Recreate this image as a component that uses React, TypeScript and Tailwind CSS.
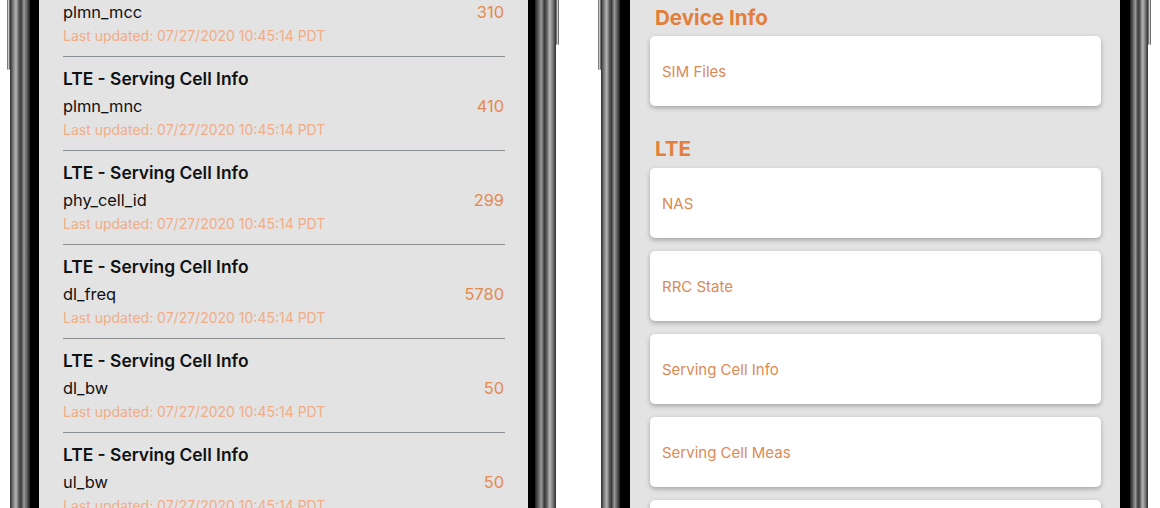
import React from "react";

const rows = [
  { field: "plmn_mcc", value: "310" },
  { field: "plmn_mnc", value: "410" },
  { field: "phy_cell_id", value: "299" },
  { field: "dl_freq", value: "5780" },
  { field: "dl_bw", value: "50" },
  { field: "ul_bw", value: "50" },
];

const bezelL =
  "bg-[linear-gradient(90deg,#2c2c2c_0%,#7a7a7a_15%,#b5b5b5_30%,#5a5a5a_45%,#3a3a3a_55%,#9a9a9a_70%,#5c5c5c_85%,#1e1e1e_100%)]";
const bezelR =
  "bg-[linear-gradient(90deg,#1e1e1e_0%,#5c5c5c_15%,#9a9a9a_30%,#3a3a3a_45%,#5a5a5a_55%,#b5b5b5_70%,#7a7a7a_85%,#2c2c2c_100%)]";

function Button({ h }: { h: string }) {
  return (
    <div
      className={`w-[3px] ${h} self-start rounded-b-[2px] bg-[linear-gradient(90deg,#555,#c8c8c8,#444)]`}
    />
  );
}

function Row({ field, value }: { field: string; value: string }) {
  return (
    <div className="border-t border-[#8a8f94] pt-[11px] pb-[10px]">
      <div className="text-[17.4px] leading-[22px] font-semibold text-[#111]">
        LTE - Serving Cell Info
      </div>
      <div className="mt-[5px] flex items-center justify-between text-[16.4px] leading-[22px]">
        <span className="text-[#111]">{field}</span>
        <span className="text-[#e58a4f] pr-[1px]">{value}</span>
      </div>
      <div className="mt-[3px] text-[14px] leading-[20px] text-[#f0ad88]">
        Last updated: 07/27/2020 10:45:14 PDT
      </div>
    </div>
  );
}

function Card({ label }: { label: string }) {
  return (
    <div className="h-[70px] rounded-[5px] bg-white shadow-[0_2px_5px_rgba(0,0,0,0.28)] flex items-center px-[12px] pt-[2px] text-[15px] text-[#dc8a55]">
      {label}
    </div>
  );
}

export default function App() {
  return (
    <div
      className="w-[1160px] h-[508px] overflow-hidden bg-white flex"
      style={{ fontFamily: "Inter, 'Noto Sans', sans-serif" }}
    >
      {/* Left phone */}
      <div className="w-[7px]" />
      <Button h="h-[70px]" />
      <div className={`w-[20px] ${bezelL}`} />
      <div className="w-[9px] bg-black" />
      <div className="w-[489px] bg-[#e3e3e3] overflow-hidden pr-[23px] pl-[24px]">
        <div className="-mt-[38px]">
          {rows.map((r, i) => (
            <Row key={i} field={r.field} value={r.value} />
          ))}
        </div>
      </div>
      <div className="w-[7px] bg-black" />
      <div className={`w-[21px] ${bezelR}`} />
      <Button h="h-[45px]" />
      <div className="w-[39px]" />
      {/* Right phone */}
      <Button h="h-[70px]" />
      <div className={`w-[19px] ${bezelL}`} />
      <div className="w-[10px] bg-black" />
      <div className="w-[490px] bg-[#e3e3e3] overflow-hidden pl-[20px] pr-[19px]">
        <div className="pt-[6px] pl-[5px] text-[20.6px] leading-[24px] font-bold text-[#e37f3c]">
          Device Info
        </div>
        <div className="mt-[6px]">
          <Card label="SIM Files" />
        </div>
        <div className="mt-[31px] pl-[5px] text-[20.6px] leading-[24px] font-bold text-[#e37f3c]">
          LTE
        </div>
        <div className="mt-[7px] flex flex-col gap-[13px]">
          <Card label="NAS" />
          <Card label="RRC State" />
          <Card label="Serving Cell Info" />
          <Card label="Serving Cell Meas" />
          <Card label="" />
        </div>
      </div>
      <div className="w-[10px] bg-black" />
      <div className={`w-[18px] ${bezelR}`} />
      <Button h="h-[45px]" />
    </div>
  );
}
